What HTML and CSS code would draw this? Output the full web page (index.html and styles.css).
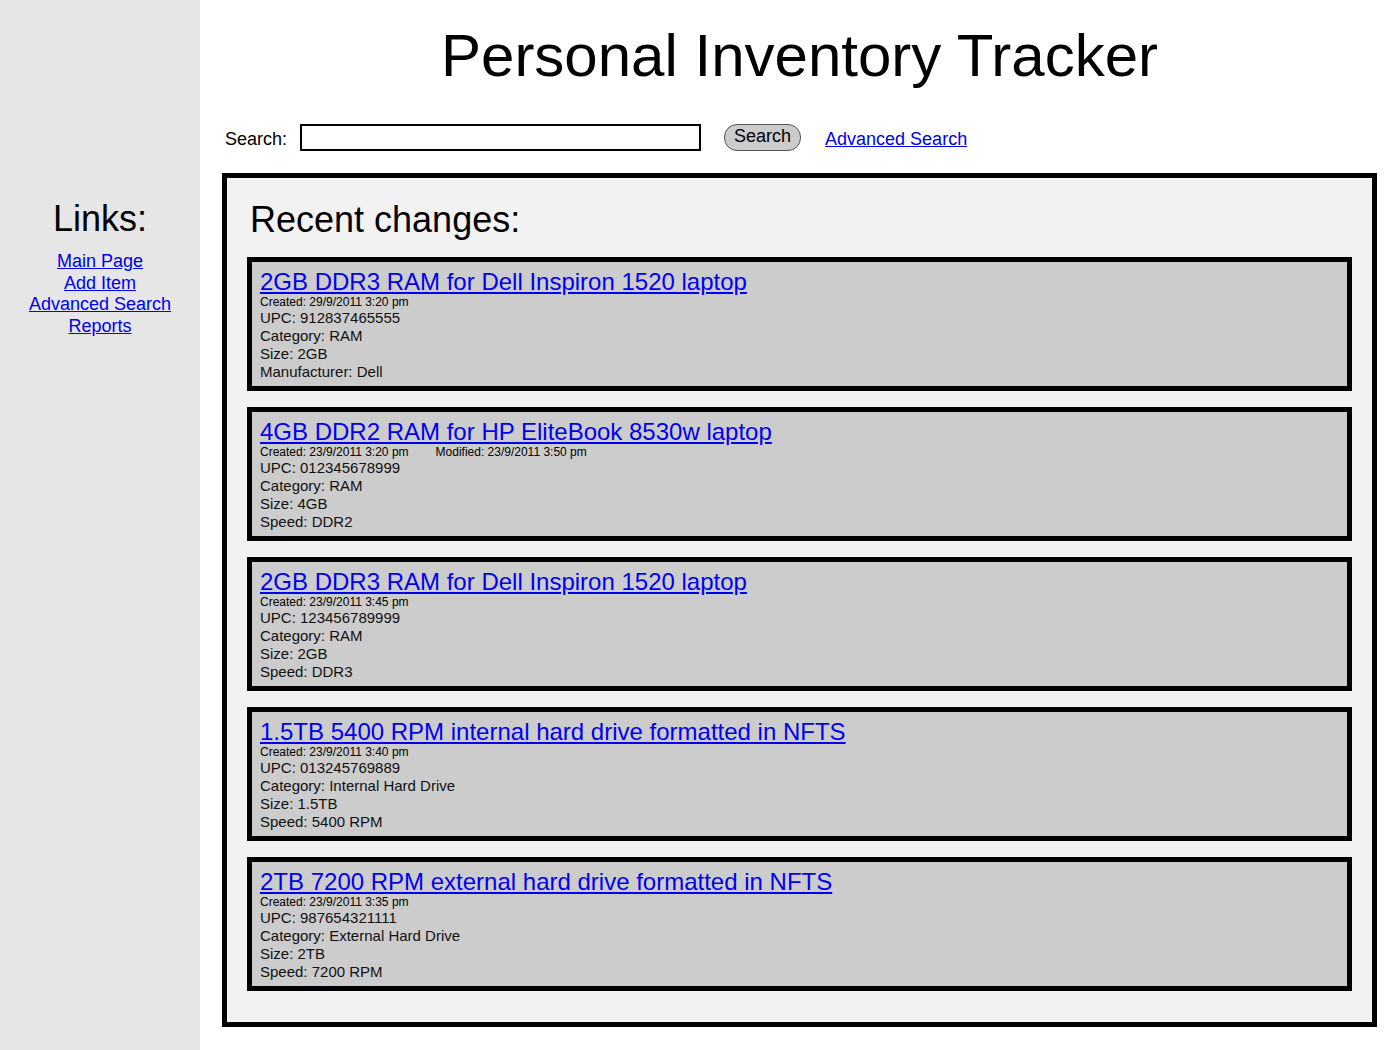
FILE: index.html
```html
<!DOCTYPE html>
<html>
<head>
<meta charset="utf-8">
<title>Personal Inventory Tracker</title>
<link rel="stylesheet" href="styles.css">
</head>
<body>
<div class="page">
  <aside class="sidebar">
    <h2 class="side-title">Links:</h2>
    <nav class="side-links">
      <a href="#">Main Page</a>
      <a href="#">Add Item</a>
      <a href="#">Advanced Search</a>
      <a href="#">Reports</a>
    </nav>
  </aside>
  <main class="main">
    <h1 class="title">Personal Inventory Tracker</h1>
    <form class="search-row">
      <label class="search-label">Search:</label>
      <input class="search-input" type="text">
      <button class="search-btn" type="button">Search</button>
      <a class="adv-link" href="#">Advanced Search</a>
    </form>
    <section class="recent">
      <h2 class="recent-title">Recent changes:</h2>
      <div class="item">
        <a class="item-title" href="#">2GB DDR3 RAM for Dell Inspiron 1520 laptop</a>
        <div class="meta"><span>Created: 29/9/2011 3:20 pm</span></div>
        <div class="line">UPC: 912837465555</div>
        <div class="line">Category: RAM</div>
        <div class="line">Size: 2GB</div>
        <div class="line">Manufacturer: Dell</div>
      </div>
      <div class="item">
        <a class="item-title" href="#">4GB DDR2 RAM for HP EliteBook 8530w laptop</a>
        <div class="meta"><span>Created: 23/9/2011 3:20 pm</span><span class="mod">Modified: 23/9/2011 3:50 pm</span></div>
        <div class="line">UPC: 012345678999</div>
        <div class="line">Category: RAM</div>
        <div class="line">Size: 4GB</div>
        <div class="line">Speed: DDR2</div>
      </div>
      <div class="item">
        <a class="item-title" href="#">2GB DDR3 RAM for Dell Inspiron 1520 laptop</a>
        <div class="meta"><span>Created: 23/9/2011 3:45 pm</span></div>
        <div class="line">UPC: 123456789999</div>
        <div class="line">Category: RAM</div>
        <div class="line">Size: 2GB</div>
        <div class="line">Speed: DDR3</div>
      </div>
      <div class="item">
        <a class="item-title" href="#">1.5TB 5400 RPM internal hard drive formatted in NFTS</a>
        <div class="meta"><span>Created: 23/9/2011 3:40 pm</span></div>
        <div class="line">UPC: 013245769889</div>
        <div class="line">Category: Internal Hard Drive</div>
        <div class="line">Size: 1.5TB</div>
        <div class="line">Speed: 5400 RPM</div>
      </div>
      <div class="item">
        <a class="item-title" href="#">2TB 7200 RPM external hard drive formatted in NFTS</a>
        <div class="meta"><span>Created: 23/9/2011 3:35 pm</span></div>
        <div class="line">UPC: 987654321111</div>
        <div class="line">Category: External Hard Drive</div>
        <div class="line">Size: 2TB</div>
        <div class="line">Speed: 7200 RPM</div>
      </div>
    </section>
  </main>
</div>
</body>
</html>
```

FILE: styles.css
```css
* { box-sizing: border-box; }
html, body {
  margin: 0;
  padding: 0;
  background: #ffffff;
  font-family: "Liberation Sans", Arial, sans-serif;
  color: #000;
}
a { color: #0000ee; }
.page {
  display: flex;
  min-height: 1050px;
}
.sidebar {
  width: 200px;
  flex: 0 0 200px;
  background: #e6e6e6;
  text-align: center;
  padding-top: 198px;
}
.side-title {
  margin: 0;
  font-size: 36px;
  font-weight: normal;
  line-height: 42px;
}
.side-links {
  display: flex;
  flex-direction: column;
  align-items: center;
  margin-top: 11px;
  font-size: 18px;
  line-height: 21.5px;
}
.main {
  flex: 1;
  padding: 20px 23px 23px 22px;
}
.title {
  margin: 0;
  text-align: center;
  font-size: 60px;
  font-weight: normal;
  line-height: 72px;
}
.search-row {
  display: flex;
  align-items: center;
  margin: 31px 0 0 3px;
  height: 28px;
  font-size: 18px;
}
.search-label { margin-right: 13px; padding-top: 4px; }
.search-input {
  width: 401px;
  height: 27px;
  border: 2px solid #000;
  background: #fff;
  margin: 0;
  padding: 0;
}
.search-btn {
  margin-left: 23px;
  height: 27px;
  width: 77px;
  border: 1px solid #555;
  border-radius: 13px;
  background: #cccccc;
  font-family: "Liberation Sans", Arial, sans-serif;
  font-size: 18px;
  padding: 0 0 2px;
  color: #000;
}
.adv-link { margin-left: 24px; padding-top: 4px; }
.recent {
  margin-top: 22px;
  border: 5px solid #000;
  background: #f2f2f2;
  padding: 21px 20px 31px 20px;
}
.recent-title {
  margin: 0 0 16px 3px;
  font-size: 36px;
  font-weight: normal;
  line-height: 42px;
}
.item {
  border: 5px solid #000;
  background: #cccccc;
  padding: 7px 8px 4px;
  margin-bottom: 16px;
  height: 134px;
}
.item:last-child { margin-bottom: 0; }
.item-title {
  display: block;
  font-size: 24px;
  line-height: 26px;
}
.meta {
  font-size: 12px;
  line-height: 14px;
  display: flex;
}
.mod { margin-left: 27px; }
.line {
  font-size: 15px;
  line-height: 18px;
  color: #111;
}
```
